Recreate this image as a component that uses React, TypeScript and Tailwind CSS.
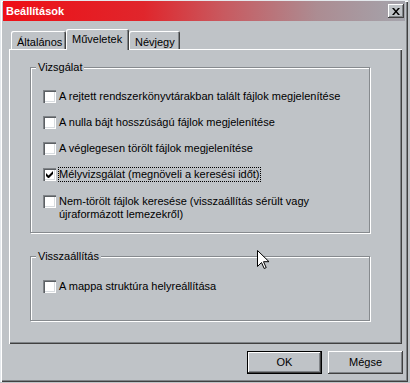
import type { ReactNode } from "react";

const raised =
  "shadow-[inset_-1px_-1px_0_#404040,inset_1px_1px_0_#ffffff,inset_-2px_-2px_0_#808488]";

function Checkbox({ checked = false }: { checked?: boolean }) {
  return (
    <span className="w-[13px] h-[13px] shrink-0 bg-white shadow-[inset_1px_1px_0_#808488,inset_2px_2px_0_#5c6064,inset_-1px_-1px_0_#ffffff,inset_-2px_-2px_0_#d8dce0] flex items-center justify-center">
      {checked && (
        <svg width="7" height="7" viewBox="0 0 7 7">
          <path d="M0 2v3l2 2h1l4-4V0L2.5 4.5z" fill="#000" />
        </svg>
      )}
    </span>
  );
}

function Row({ checked, focus, children }: { checked?: boolean; focus?: boolean; children: ReactNode }) {
  return (
    <div className="flex items-start gap-[3px]">
      <Checkbox checked={checked} />
      <span
        className={
          focus
            ? "leading-[13px] -mt-[1px] px-[1px] py-[1px] -ml-[1px] outline outline-1 outline-dotted outline-black -outline-offset-1"
            : "leading-[13px]"
        }
      >
        {children}
      </span>
    </div>
  );
}

function Group({ label, className, children }: { label: string; className: string; children: ReactNode }) {
  return (
    <div
      className={`relative border border-[#868a8e] shadow-[1px_1px_0_#ffffff,inset_1px_1px_0_#ffffff] ${className}`}
    >
      <span className="absolute left-[5px] -top-[7px] bg-[#bfc3c7] px-[2px] leading-[13px]">{label}</span>
      {children}
    </div>
  );
}

function Tab({ label, active, className }: { label: string; active?: boolean; className: string }) {
  return (
    <div
      className={`relative flex items-start rounded-t-[2px] bg-[#bfc3c7] shadow-[inset_1px_1px_0_#ffffff,inset_-1px_0_0_#404040,inset_-2px_0_0_#808488] ${className} ${
        active ? "h-[21px] z-10 -mb-[1px] pt-[4px] px-[6px]" : "h-[18px] pt-[5px] px-[6px]"
      }`}
    >
      <span className="leading-[13px]">{label}</span>
    </div>
  );
}

export default function App() {
  return (
    <div className="w-[410px] h-[383px] bg-[#bfc3c7] overflow-hidden relative font-['Liberation_Sans','DejaVu_Sans',sans-serif] text-[11px] text-black">
      <div className="w-[408px] h-[382px] pt-[1px] px-[3px] shadow-[inset_1px_1px_0_#e4e8ec,inset_2px_2px_0_#ffffff,inset_-1px_-1px_0_#404040,inset_-2px_-2px_0_#808488]">
        {/* title bar */}
        <div className="h-[20px] flex items-center justify-between pl-[3px] pr-[1px] bg-[linear-gradient(to_right,#ee0f16_0%,#e0262c_35%,#c85a60_55%,#ac8c92_78%,#a4a4ac_100%)]">
          <span className="font-bold text-white leading-[13px]">Beállítások</span>
          <div className={`w-[16px] h-[14px] bg-[#bfc3c7] flex items-center justify-center ${raised}`}>
            <svg width="8" height="7" viewBox="0 0 8 7">
              <path d="M0 0h2l2 2.5L6 0h2L5 3.5 8 7H6L4 4.5 2 7H0l3-3.5z" fill="#000" />
            </svg>
          </div>
        </div>

        {/* tabs */}
        <div className="mt-[8px] ml-[6px] flex items-end h-[20px]">
          <Tab label="Általános" className="ml-[2px] w-[55px]" />
          <Tab label="Műveletek" active className="w-[63px]" />
          <Tab label="Névjegy" className="w-[51px]" />
        </div>

        {/* tab panel */}
        <div className="ml-[6px] w-[393px] h-[295px] pt-[18px] pl-[21px] shadow-[inset_1px_1px_0_#ffffff,inset_-1px_-1px_0_#404040,inset_-2px_-2px_0_#808488]">
          <Group label="Vizsgálat" className="w-[340px] h-[166px] pt-[22px] pl-[12px]">
            <div className="flex flex-col gap-[13px]">
              <Row>A rejtett rendszerkönyvtárakban talált fájlok megjelenítése</Row>
              <Row>A nulla bájt hosszúságú fájlok megjelenítése</Row>
              <Row>A véglegesen törölt fájlok megjelenítése</Row>
              <Row checked focus>
                Mélyvizsgálat (megnöveli a keresési időt)
              </Row>
              <Row>
                Nem-törölt fájlok keresése (visszaállítás sérült vagy
                <br />
                újraformázott lemezekről)
              </Row>
            </div>
          </Group>
          <Group label="Visszaállítás" className="mt-[23px] w-[340px] h-[65px] pt-[23px] pl-[12px]">
            <Row>A mappa struktúra helyreállítása</Row>
          </Group>
        </div>

        {/* buttons */}
        <div className="mt-[7px] flex justify-end gap-[6px] pr-[2px]">
          <button className={`w-[75px] h-[23px] bg-[#bfc3c7] border border-black shadow-[inset_-1px_-1px_0_#404040,inset_1px_1px_0_#ffffff,inset_-2px_-2px_0_#808488] leading-[13px]`}>
            OK
          </button>
          <button className={`w-[75px] h-[23px] bg-[#bfc3c7] leading-[13px] ${raised}`}>Mégse</button>
        </div>
      </div>

      {/* mouse cursor */}
      <svg className="absolute left-[257px] top-[250px]" width="12" height="20" viewBox="0 0 12 20">
        <path d="M0.5 0.5v16l4-4 2.7 6 2-0.9-2.7-5.9h5.5z" fill="#fff" stroke="#000" strokeWidth="1" />
      </svg>
    </div>
  );
}
